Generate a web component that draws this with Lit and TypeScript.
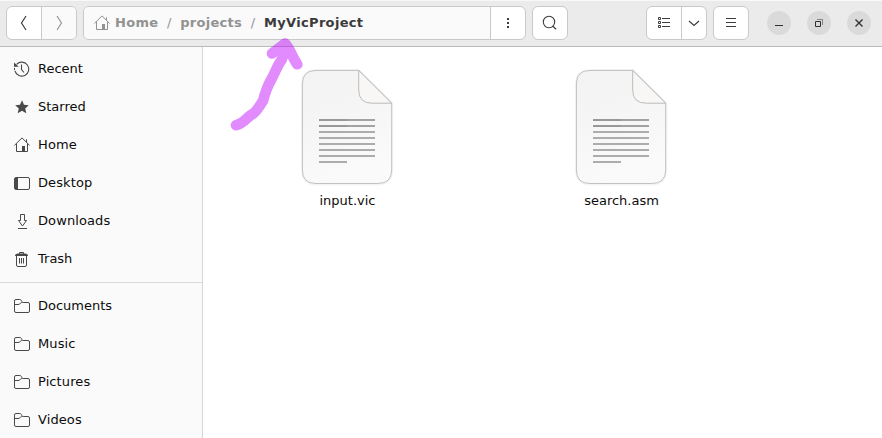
import { LitElement, html, css, svg } from "lit";
import { customElement, property } from "lit/decorators.js";

const icons: Record<string, unknown> = {
  recent: svg`<path d="M2.6 3.4A7 7 0 1 1 1 10" fill="none" stroke="currentColor" stroke-width="1.1"/><path d="M.5 7v2.200" stroke="currentColor"/><path d="M0 1.6v4.1h4.8z" fill="currentColor"/><path d="M7.5 3.5v5l2.5 3" fill="none" stroke="currentColor" stroke-width="1.1"/>`,
  star: svg`<path d="M8 1.2l2 4.6 4.8.4-3.6 3.3 1.1 4.8L8 11.8l-4.3 2.5 1.1-4.8L1.200 6.200 6 5.800z" fill="currentColor"/>`,
  home: svg`<path d="M.4 8.400L8 .900l7.600 7.500M2.500 6.700v7.800h11V6.700M12.500 2.300v3" fill="none" stroke="currentColor"/><path d="M8 14.500V9h3v5.500z" fill="currentColor"/>`,
  desktop: svg`<rect x=".5" y="2.500" width="15" height="12" rx="1.500" fill="none" stroke="currentColor"/><path d="M1 3h3v11H1z" fill="currentColor"/>`,
  download: svg`<path d="M6.500 1.500h4v6h2L8.500 13l-4-5.500h2zM4 15.500h9" fill="none" stroke="currentColor"/>`,
  trash: svg`<path d="M2.500 5v9q0 1.500 1.500 1.500h7q1.500 0 1.500-1.500V5M5.500 7v5.500M7.500 7v5.500M9.500 7v5.500M5.500 3V1.500h4V3" fill="none" stroke="currentColor"/><path d="M1 5q0-2.500 3-2.500h7q3 0 3 2.500z" fill="currentColor"/>`,
  folder: svg`<path d="M.5 3Q.5 1.500 2 1.500h3.800q1 0 1.500.9l.6 1.200q.4.900 1.200.9h4.900q1.500 0 1.500 1.500v7q0 1.500-1.500 1.500H2Q.5 14.500.5 13zM.5 6.500h3.500q1.200 0 2-.8l.7-.6q.6-.6 1.600-.6" fill="none" stroke="currentColor"/>`,
  back: svg`<path d="M10 1L5.500 8l4.500 7" fill="none" stroke="currentColor" stroke-width="1.200"/>`,
  forward: svg`<path d="M6 1l4.500 7L6 15" fill="none" stroke="currentColor" stroke-width="1.200"/>`,
  dots: svg`<path d="M7 3h2v2H7zM7 7h2v2H7zM7 11h2v2H7z" fill="currentColor"/>`,
  search: svg`<circle cx="7" cy="7" r="5.700" fill="none" stroke="currentColor" stroke-width="1.100"/><path d="M10.500 11l3.600 3.200" fill="none" stroke="currentColor" stroke-width="1.300"/>`,
  list: svg`<path d="M2.500 2.500h2v2h-2zM2.500 6.500h2v2h-2zM2.500 10.500h2v2h-2zM6 3.500h8M6 7.500h8M6 11.500h8" fill="none" stroke="currentColor"/>`,
  down: svg`<path d="M3 6l5 4.500L13 6" fill="none" stroke="currentColor" stroke-width="1.200"/>`,
  menu: svg`<path d="M3 3.500h10M3 7.500h10M3 11.500h10" fill="none" stroke="currentColor"/>`,
  minimize: svg`<path d="M4 10.500h8" fill="none" stroke="currentColor"/>`,
  restore: svg`<path d="M4.500 6.500h5v5h-5z" fill="none" stroke="currentColor"/><path d="M6 4.500h5.500V10" fill="none" stroke="currentColor" opacity=".5"/>`,
  close: svg`<path d="M4.500 4.500l7 7m0-7l-7 7" fill="none" stroke="currentColor" stroke-width="1.400"/>`,
};

@customElement("ui-icon")
class UiIcon extends LitElement {
  @property() name = "";
  static styles = css`
    :host { display: block; width: 16px; height: 16px; flex: none; }
    svg { display: block; overflow: visible; }
  `;
  render() {
    return html`<svg width="16" height="16" viewBox="0 0 16 16">${icons[this.name]}</svg>`;
  }
}

@customElement("file-item")
class FileItem extends LitElement {
  @property() name = "";
  static styles = css`
    :host { display: flex; flex-direction: column; align-items: center; }
    svg { display: block; }
    .label { line-height: 16px; margin-top: 2px; padding-left: 1px; white-space: nowrap; }
  `;
  render() {
    return html`
      <svg width="128" height="128" viewBox="0 0 128 128">
        <defs>
          <linearGradient id="paper" x1="0" y1="0" x2=".3" y2="1">
            <stop offset="0" stop-color="#f3f3f3" />
            <stop offset=".4" stop-color="#f5f5f5" />
            <stop offset="1" stop-color="#fafafa" />
          </linearGradient>
        </defs>
        <path d="M33 7.400H75.700L108.700 40.200V107q0 14-14 14H33q-13.600 0-13.600-14V21q0-13.600 13.600-13.600z" fill="none" stroke="#000" stroke-opacity=".04" stroke-width="3" />
        <path d="M33 7.400H75.700L108.700 40.200V107q0 13.500-14 13.500H33q-13.600 0-13.600-13.500V21q0-13.600 13.600-13.600z" fill="url(#paper)" stroke="#c1c1c1" />
        <path d="M75.700 7.400V27q0 13.200 13.500 13.200h19.500z" fill="#f8f7f5" stroke="#bcbcbc" />
        <path d="M36 57h28M36 63h28" stroke="#989898" stroke-width="2" />
        <path d="M64 57h28M64 63h28" stroke="#a2a2a2" stroke-width="2" />
        <path d="M36 69h56M36 75h56M36 81h56M36 87h56M36 93h56M36 99h28" stroke="#acacac" stroke-width="2" />
      </svg>
      <div class="label">${this.name}</div>
    `;
  }
}

@customElement("app-root")
class AppRoot extends LitElement {
  static styles = css`
    :host {
      display: flex; flex-direction: column; position: relative;
      width: 882px; height: 438px; overflow: hidden; background: #fff;
      font: 13px "DejaVu Sans", sans-serif; color: #0c0c0c;
    }
    * { box-sizing: border-box; }
    .header {
      height: 47px; flex: none; display: flex; align-items: flex-start;
      padding: 5px 11px 0 6px; background: #ebebeb;
      border-top: 1px solid #f8f8f8; border-bottom: 1px solid #bababa;
    }
    .group {
      display: flex; flex: none; height: 34px; border: 1px solid #c9c9c9; border-radius: 6px;
      background: #fff; color: #3d3d3d; overflow: hidden;
    }
    .cell { width: 34px; flex: none; display: flex; align-items: center; justify-content: center; }
    .cell + .cell, .crumbs + .cell { border-left: 1px solid #c9c9c9; width: 35px; }
    .disabled { background: #fafafa; color: #969696; }
    .path { width: 443px; margin: 0 6px; }
    .crumbs {
      width: 406px; flex: none; display: flex; align-items: center; padding-left: 10px;
      background: #fafafa; color: #929292; font-weight: bold; white-space: pre; letter-spacing: .29px;
    }
    .crumbs span { padding-bottom: 1px; }
    .crumbs .home { margin-right: 5px; }
    .crumbs .slash { font-weight: normal; margin: 0 8.600px; }
    .crumbs .current { color: #3a3a3a; letter-spacing: .33px; }
    .single { width: 36px; }
    .spacer { flex: 1; }
    .view { margin-right: 6px; }
    .view .cell + .cell { width: 25px; }
    .controls { display: flex; gap: 16px; margin: 5px 0 0 18px; }
    .control {
      width: 24px; height: 24px; border-radius: 50%; background: #dadada;
      color: #303030; display: flex; align-items: center; justify-content: center;
    }
    .body { display: flex; flex: 1; min-height: 0; }
    .sidebar { width: 203px; flex: none; padding-top: 3px; background: #fafafa; border-right: 1px solid #d6d6d6; }
    .row { height: 38px; display: flex; align-items: center; gap: 8px; padding-left: 14px; }
    .row ui-icon { color: #494949; }
    .row span { padding-bottom: 1px; }
    .loose { letter-spacing: .1px; }
    .rule { height: 1px; margin: 4px 0; background: #d9d9d9; }
    .files { display: grid; grid-template-columns: 274px 274px; align-content: start; padding: 16px 0 0 7px; }
    .marker { position: absolute; left: 0; top: 0; pointer-events: none; }
  `;

  private row(icon: string, label: string) {
    const loose = ["Home", "Desktop", "Downloads", "Music", "Pictures", "Videos"].includes(label);
    return html`<div class="row"><ui-icon name=${icon}></ui-icon><span class=${loose ? "loose" : ""}>${label}</span></div>`;
  }

  render() {
    return html`
      <div class="header">
        <div class="group">
          <div class="cell"><ui-icon name="back"></ui-icon></div>
          <div class="cell disabled"><ui-icon name="forward"></ui-icon></div>
        </div>
        <div class="group path">
          <div class="crumbs">
            <ui-icon class="home" name="home"></ui-icon><span>Home</span><span class="slash">/</span><span>projects</span><span class="slash">/</span><span class="current">MyVicProject</span>
          </div>
          <div class="cell"><ui-icon name="dots"></ui-icon></div>
        </div>
        <div class="group single"><div class="cell"><ui-icon name="search"></ui-icon></div></div>
        <div class="spacer"></div>
        <div class="group view">
          <div class="cell"><ui-icon name="list"></ui-icon></div>
          <div class="cell"><ui-icon name="down"></ui-icon></div>
        </div>
        <div class="group single"><div class="cell"><ui-icon name="menu"></ui-icon></div></div>
        <div class="controls">
          ${["minimize", "restore", "close"].map((n) => html`<div class="control"><ui-icon name=${n}></ui-icon></div>`)}
        </div>
      </div>
      <div class="body">
        <div class="sidebar">
          ${this.row("recent", "Recent")} ${this.row("star", "Starred")} ${this.row("home", "Home")}
          ${this.row("desktop", "Desktop")} ${this.row("download", "Downloads")} ${this.row("trash", "Trash")}
          <div class="rule"></div>
          ${["Documents", "Music", "Pictures", "Videos"].map((n) => this.row("folder", n))}
        </div>
        <div class="files">
          <file-item name="input.vic"></file-item>
          <file-item name="search.asm"></file-item>
        </div>
      </div>
      <svg class="marker" width="320" height="140" viewBox="0 0 320 140">
        <path
          d="M236 125.200C243 124 247 117.500 251 115C257 112 259 106 263 101C265 93 267 87 271 80C275 73 277 66 281.500 60L285.500 50L285 43.500L272 53.500M285 43.500C290 48 292 57 297.300 64.300"
          fill="none" stroke="#bf08ff" stroke-opacity=".47" stroke-width="10.600" stroke-linecap="round" stroke-linejoin="round" />
      </svg>
    `;
  }
}
